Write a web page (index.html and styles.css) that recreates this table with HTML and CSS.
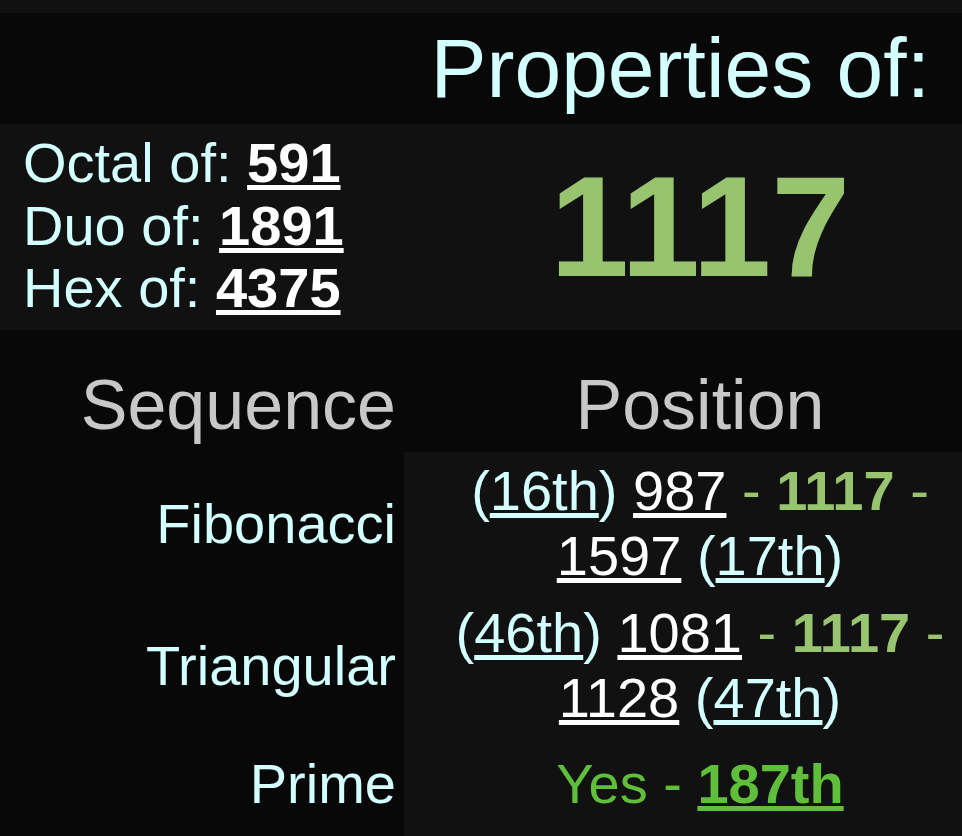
FILE: index.html
```html
<!DOCTYPE html>
<html lang="en">
<head>
    <meta charset="UTF-8">
    <title>Properties of 1117</title>
    <link rel="stylesheet" href="styles.css">
</head>
<body>
<div class="page">
    <div class="title">Properties of:</div>
    <div class="bases">
        <div class="base-list">
            <div>Octal of: <a href="#" class="num strong">591</a></div>
            <div>Duo of: <a href="#" class="num strong">1891</a></div>
            <div>Hex of: <a href="#" class="num strong">4375</a></div>
        </div>
        <div class="current">1117</div>
    </div>
    <div class="seq">
        <div class="head name">Sequence</div>
        <div class="head pos">Position</div>

        <div class="name">Fibonacci</div>
        <div class="pos">(<a href="#" class="nth">16th</a>) <a href="#" class="num">987</a> <span class="here">- <b>1117</b> -</span> <a href="#" class="num">1597</a> (<a href="#" class="nth">17th</a>)</div>

        <div class="name">Triangular</div>
        <div class="pos">(<a href="#" class="nth">46th</a>) <a href="#" class="num">1081</a> <span class="here">- <b>1117</b> -</span> <a href="#" class="num">1128</a> (<a href="#" class="nth">47th</a>)</div>

        <div class="name last">Prime</div>
        <div class="pos last prime">Yes - <a href="#" class="strong">187th</a></div>
    </div>
</div>
</body>
</html>
```

FILE: styles.css
```css
html, body {
    margin:0;
    padding:0;
}
body {
    background:#111111;
    color:#d4ffff;
    font-family:"Liberation Sans", Arial, Helvetica, sans-serif;
    overflow:hidden;
}
.page {
    padding-top:13px;
}
a {
    color:inherit;
}
a.num {
    color:#ffffff;
}
.strong {
    font-weight:bold;
}

/* top block */
.title {
    background:#080808;
    font-size:84px;
    line-height:98px;
    text-align:right;
    padding:6px 32px 7px 0;
}
.bases {
    display:grid;
    grid-template-columns:404px 1fr;
    background:#111111;
}
.base-list {
    font-size:56px;
    line-height:62.5px;
    padding:8px 0 10.5px 23px;
}
.current {
    align-self:center;
    text-align:center;
    padding-left:34px;
    font-size:142px;
    font-weight:bold;
    color:#99c46f;
}

/* sequence table */
.seq {
    display:grid;
    grid-template-columns:404px 1fr;
}
.seq .name {
    background:#080808;
    text-align:right;
    padding:6px 8px 6px 0;
    font-size:56px;
    line-height:65px;
    display:flex;
    align-items:center;
    justify-content:flex-end;
}
.seq .pos {
    background:#111111;
    text-align:center;
    padding:6px 0 6px 34px;
    font-size:56px;
    line-height:65px;
}
.seq .head {
    background:#080808;
    color:#c8c8c8;
    font-size:70px;
    line-height:81px;
    padding-top:35px;
    padding-bottom:6px;
}
.seq .head.pos {
    display:block;
}
.here {
    color:#99c46f;
}
.seq .last {
    padding-top:15px;
    padding-bottom:20px;
}
.prime {
    color:#5fbf3b;
}
```
